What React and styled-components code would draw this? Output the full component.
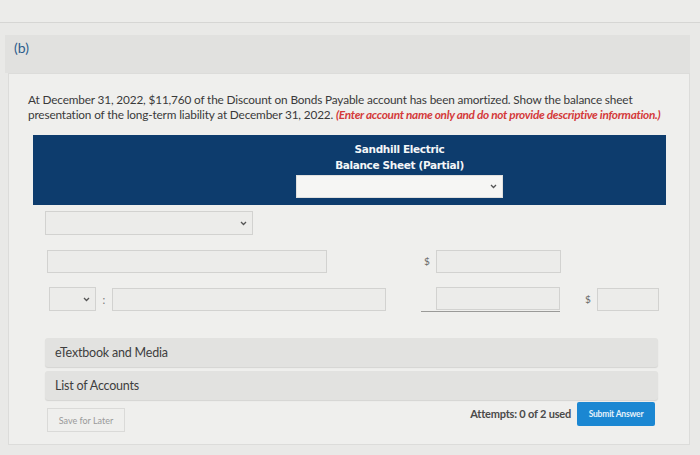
import React from "react";
import styled, { createGlobalStyle } from "styled-components";

const GlobalStyle = createGlobalStyle`
  body {
    margin: 0;
    background: #e9e9e7;
    font-family: Lato, "Open Sans", sans-serif;
    color: #3c3c3c;
  }
`;

const Chevron = () => (
  <svg width="7" height="5" viewBox="0 0 7 5">
    <path d="M1 1 L3.5 3.5 L6 1" fill="none" stroke="#555" strokeWidth="1.3" />
  </svg>
);

const App = () => {
  return (
    <>
      <GlobalStyle />
      <StyledTopStrip />
      <StyledPage>
        <StyledPartHeader>(b)</StyledPartHeader>
        <StyledPanel>
          <StyledQuestion>
            <StyledLine>
              At December 31, 2022, $11,760 of the Discount on Bonds Payable account has been
              amortized. Show the balance sheet
            </StyledLine>
            <StyledLine>
              <span>presentation of the long-term liability at December 31, 2022. </span>
              <StyledHint>
                (Enter account name only and do not provide descriptive information.)
              </StyledHint>
            </StyledLine>
          </StyledQuestion>

          <StyledSheet>
            <StyledSheetHead>
              <StyledTitle>Sandhill Electric</StyledTitle>
              <StyledTitle>Balance Sheet (Partial)</StyledTitle>
              <StyledSelect width="207px" light>
                <Chevron />
              </StyledSelect>
            </StyledSheetHead>

            <StyledRows>
              <StyledRow>
                <StyledSelect width="208px">
                  <Chevron />
                </StyledSelect>
              </StyledRow>

              <StyledRow>
                <StyledLeft>
                  <StyledInput width="280px" offset="2px" />
                </StyledLeft>
                <StyledCell>
                  <StyledDollar>$</StyledDollar>
                  <StyledInput width="125px" />
                </StyledCell>
              </StyledRow>

              <StyledRow>
                <StyledLeft>
                  <StyledSelect width="47px" offset="4px">
                    <Chevron />
                  </StyledSelect>
                  <StyledColon>:</StyledColon>
                  <StyledInput width="274px" />
                </StyledLeft>
                <StyledCell underline>
                  <StyledDollar />
                  <StyledInput width="124px" />
                </StyledCell>
                <StyledCell>
                  <StyledDollar>$</StyledDollar>
                  <StyledInput width="62px" />
                </StyledCell>
              </StyledRow>
            </StyledRows>
          </StyledSheet>

          <StyledBars>
            <StyledBar>eTextbook and Media</StyledBar>
            <StyledBar>List of Accounts</StyledBar>
          </StyledBars>

          <StyledFooter>
            <StyledSaveButton>Save for Later</StyledSaveButton>
            <StyledSubmitGroup>
              <StyledAttempts>Attempts: 0 of 2 used</StyledAttempts>
              <StyledSubmitButton>Submit Answer</StyledSubmitButton>
            </StyledSubmitGroup>
          </StyledFooter>
        </StyledPanel>
      </StyledPage>
    </>
  );
};

const StyledTopStrip = styled.div`
  height: 22px;
  background: #ececea;
  border-bottom: 1px solid #d6d6d4;
`;

const StyledPage = styled.div`
  padding: 12px 10px 0 5px;
  width: 685px;
`;

const StyledPartHeader = styled.div`
  height: 38px;
  background: #e1e1df;
  padding-left: 9px;
  padding-top: 4px;
  box-sizing: border-box;
  font-size: 14px;
  color: #2c5d8c;
`;

const StyledPanel = styled.div`
  margin-left: 3px;
  height: 372px;
  background: #efefed;
  border: 1px solid #dcdcda;
  box-sizing: border-box;
  padding: 18px 10px 0 19px;
`;

const StyledQuestion = styled.div`
  font-size: 11.8px;
  line-height: 15px;
  letter-spacing: -0.15px;
  color: #3a3a3a;
`;

const StyledLine = styled.div`
  white-space: nowrap;
`;

const StyledHint = styled.span`
  color: #d43a3a;
  font-weight: bold;
  font-style: italic;
  letter-spacing: -0.3px;
`;

const StyledSheet = styled.div`
  margin-top: 13px;
  margin-left: 5px;
  width: 633px;
`;

const StyledSheetHead = styled.div`
  height: 70px;
  background: #0d3c6d;
  display: flex;
  flex-direction: column;
  align-items: center;
  padding: 7px 0 0 100px;
  box-sizing: border-box;
`;

const StyledTitle = styled.div`
  font-family: "DejaVu Sans", Verdana, sans-serif;
  font-weight: bold;
  font-size: 10.5px;
  line-height: 15.5px;
  letter-spacing: -0.35px;
  color: #f4f6f8;
`;

const StyledSelect = styled.div`
  width: ${(props) => props.width};
  height: ${(props) => (props.light ? "23px" : "24px")};
  margin-top: ${(props) => (props.light ? "2px" : "0")};
  margin-left: ${(props) => props.offset || "0"};
  box-sizing: border-box;
  background: ${(props) => (props.light ? "#f6f6f4" : "#ececea")};
  border: 1px solid ${(props) => (props.light ? "#e0e0de" : "#d2d2d0")};
  display: flex;
  align-items: center;
  justify-content: flex-end;
  padding-right: 5px;
`;

const StyledRows = styled.div`
  padding: 6px 0 0 12px;
  display: flex;
  flex-direction: column;
  gap: 14px;
`;

const StyledRow = styled.div`
  display: flex;
  align-items: center;
  height: 24px;
`;

const StyledLeft = styled.div`
  width: 376px;
  display: flex;
  align-items: center;
`;

const StyledCell = styled.div`
  display: flex;
  align-items: center;
  height: 24px;
  width: ${(props) => (props.underline ? "139px" : "auto")};
  margin-right: ${(props) => (props.underline ? "22px" : "0")};
  border-bottom: ${(props) => (props.underline ? "1px solid #9a9a98" : "none")};
`;

const StyledDollar = styled.span`
  width: 12px;
  font-size: 10px;
  color: #666;
  padding-left: 3px;
`;

const StyledInput = styled.div`
  width: ${(props) => props.width};
  margin-left: ${(props) => props.offset || "0"};
  height: 23px;
  box-sizing: border-box;
  background: #ececea;
  border: 1px solid #d2d2d0;
`;

const StyledColon = styled.span`
  width: 16px;
  text-align: center;
  font-size: 11px;
  color: #777;
`;

const StyledBars = styled.div`
  margin-top: 27px;
  margin-left: 17px;
  width: 613px;
  display: flex;
  flex-direction: column;
  gap: 4px;
`;

const StyledBar = styled.div`
  height: 29px;
  background: #e2e2e0;
  border-radius: 3px;
  box-shadow: 0 1px 1px #d4d4d2;
  display: flex;
  align-items: center;
  padding-left: 10px;
  font-size: 12.5px;
  letter-spacing: -0.2px;
  color: #3e3e3e;
`;

const StyledFooter = styled.div`
  margin-left: 19px;
  width: 608px;
  display: flex;
  justify-content: space-between;
  align-items: flex-start;
  margin-top: 2px;
`;

const StyledSaveButton = styled.div`
  margin-top: 6px;
  width: 78px;
  height: 24px;
  box-sizing: border-box;
  border: 1px solid #dadad8;
  background: #efefed;
  display: flex;
  align-items: center;
  justify-content: center;
  font-size: 9px;
  color: #9a9a9a;
`;

const StyledSubmitGroup = styled.div`
  display: flex;
  align-items: center;
  gap: 6px;
`;

const StyledAttempts = styled.span`
  font-size: 11px;
  font-weight: bold;
  color: #4a4a4a;
  margin-top: -2px;
  letter-spacing: -0.2px;
`;

const StyledSubmitButton = styled.div`
  width: 78px;
  height: 24px;
  border-radius: 2px;
  background: #1b87d2;
  color: #e6f1fa;
  display: flex;
  align-items: center;
  justify-content: center;
  font-size: 8.5px;
  font-weight: bold;
  letter-spacing: -0.2px;
`;

export default App;
